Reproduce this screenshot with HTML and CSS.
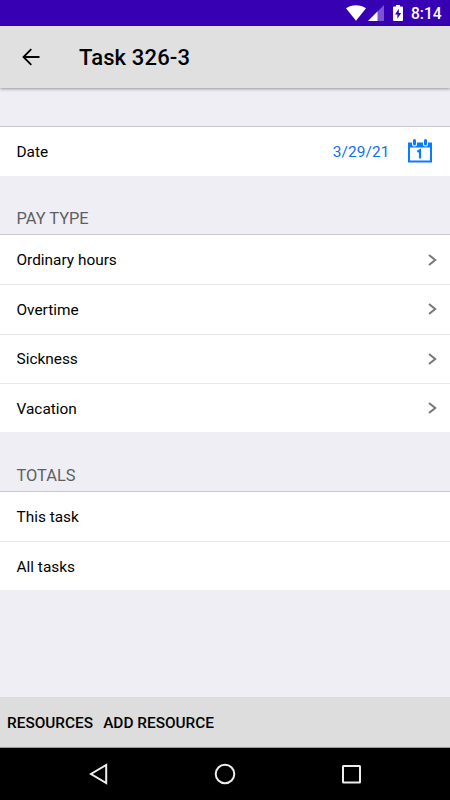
FILE: index.html
```html
<!DOCTYPE html>
<html lang="en">
<head>
<meta charset="utf-8">
<title>Task 326-3</title>
<link rel="stylesheet" href="styles.css">
</head>
<body>
<div class="screen">
  <div class="status">
    <svg class="wifi" width="20" height="16" viewBox="0 0 20 16"><path d="M0 3.2C5.800-.9 14.200-.9 20 3.200L10 15.700Z" fill="#fff"/></svg>
    <svg class="signal" width="16" height="16" viewBox="0 0 16 16"><path d="M16 0V16H0Z" fill="#7c54cf"/><path d="M9.500 6.500V16H0Z" fill="#fff"/></svg>
    <svg class="battery" width="10" height="16" viewBox="0 0 10 16"><path d="M3 0H7V1.500H9Q10 1.500 10 2.500V15Q10 16 9 16H1Q0 16 0 15V2.500Q0 1.500 1 1.500H3Z" fill="#fff"/><path d="M5.800 3.700 2 9.500H4.400V13.700L8.100 7.900H5.800Z" fill="#3700b3"/></svg>
    <span class="clock">8:14</span>
  </div>
  <header class="appbar">
    <svg class="back" width="18" height="18" viewBox="0 0 18 18" fill="none" stroke="#000" stroke-width="1.800"><path d="M17.500 9H1.500M9.300 1.200 1.500 9l7.800 7.800"/></svg>
    <h1 class="title">Task 326-3</h1>
  </header>
  <main class="content">
    <section class="group date-group">
      <div class="row"><span class="label">Date</span><span class="date">3/29/21</span>
        <svg class="calendar" width="24" height="24" viewBox="0 0 24 24"><path d="M0 3.500H24V23.500H0ZM2 8.500V21.500H22V8.500Z" fill="#087bff" fill-rule="evenodd"/><path d="M6.500 2V5M17.500 2V5" stroke="#fff" stroke-width="5" stroke-linecap="round"/><path d="M6.500 1.500V5M17.500 1.500V5" stroke="#087bff" stroke-width="3" stroke-linecap="round"/><path d="M9.300 12.700 12 11.200V19.500" fill="none" stroke="#087bff" stroke-width="2.200"/></svg>
      </div>
    </section>
    <h2 class="heading">PAY TYPE</h2>
    <section class="group">
      <div class="row"><span class="label">Ordinary hours</span><svg class="chevron" width="9" height="12" viewBox="0 0 9 12"><path d="M1 1 7.200 6 1 11"/></svg></div>
      <div class="row"><span class="label">Overtime</span><svg class="chevron" width="9" height="12" viewBox="0 0 9 12"><path d="M1 1 7.200 6 1 11"/></svg></div>
      <div class="row"><span class="label">Sickness</span><svg class="chevron" width="9" height="12" viewBox="0 0 9 12"><path d="M1 1 7.200 6 1 11"/></svg></div>
      <div class="row"><span class="label">Vacation</span><svg class="chevron" width="9" height="12" viewBox="0 0 9 12"><path d="M1 1 7.200 6 1 11"/></svg></div>
    </section>
    <h2 class="heading">TOTALS</h2>
    <section class="group">
      <div class="row"><span class="label">This task</span></div>
      <div class="row"><span class="label">All tasks</span></div>
    </section>
  </main>
  <footer class="toolbar"><span class="resources">RESOURCES</span><span class="add">ADD RESOURCE</span></footer>
  <nav class="navbar">
    <svg width="20" height="22" viewBox="0 0 20 22"><path d="M17.200 2V20L2 11Z"/></svg>
    <svg width="22" height="22" viewBox="0 0 22 22"><circle cx="11" cy="11" r="9.300"/></svg>
    <svg width="20" height="20" viewBox="0 0 20 20"><rect x="2" y="2" width="17" height="16.500" rx=".5"/></svg>
  </nav>
</div>
</body>
</html>
```

FILE: styles.css
```css
* { box-sizing: border-box; }
body { margin: 0; font-family: Roboto, sans-serif; color: #000; }
.screen { width: 450px; height: 800px; display: flex; flex-direction: column; background: #efeef4; overflow: hidden; }
.status { height: 26px; flex: none; background: #3700b3; color: #fff; display: flex; align-items: center; padding-left: 346px; }
.signal { margin-left: 2px; }
.battery { margin-left: 9px; }
.clock { margin-left: 8px; padding-top: 2px; font-size: 15.600px; font-weight: 500; line-height: 26px; white-space: nowrap; }
.status svg, .status .clock { flex: none; }
.appbar { height: 62px; flex: none; background: #e0e0e0; display: flex; align-items: center; padding-left: 22px; box-shadow: 0 1px 3px rgba(0, 0, 0, .38); }
.title { margin: 0 0 0 39px; font-size: 22px; font-weight: 500; letter-spacing: .15px; line-height: 62px; padding-top: 2px; }
.content { flex: 1; padding-top: 38px; }
.group { background: #fff; border-top: 1px solid #c9c9cc; }
.row { height: 49.250px; display: flex; align-items: center; padding: 0 13px 0 16.500px; font-size: 15.400px; }
.date-group .row { height: 48.500px; }
.row + .row { border-top: 1px solid #e7e7eb; }
.label { flex: 1; padding-top: 1.400px; }
.date-group .label { padding-top: 1px; }
.date { color: #0f70f0; letter-spacing: .1px; padding-top: 1px; }
.calendar { margin: 0 5px 0 18.500px; }
.chevron { fill: none; stroke: #777; stroke-width: 2; }
.heading { margin: 0; height: 58.500px; padding: 33.500px 16.500px 0; font-size: 16.400px; font-weight: 400; line-height: 19px; color: #5e5e63; }
.toolbar { height: 51px; flex: none; background: #ddd; border-bottom: 1px solid #999; display: flex; align-items: center; padding: 2px 0 0 7px; font-size: 15.400px; font-weight: 500; white-space: nowrap; }
.add { margin-left: 10px; }
.navbar { height: 52px; flex: none; background: #000; display: flex; align-items: center; padding-left: 89px; }
.navbar svg { fill: none; stroke: #eee; stroke-width: 2; }
.navbar svg + svg { margin-left: 105px; }
```
